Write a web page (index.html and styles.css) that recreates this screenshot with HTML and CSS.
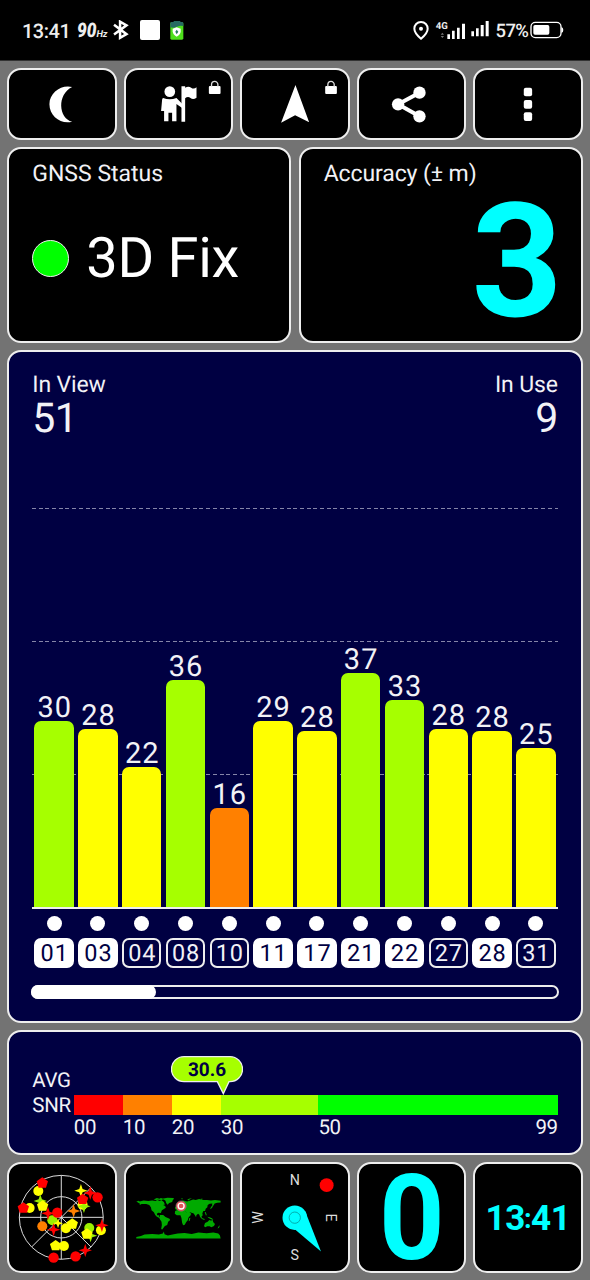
FILE: index.html
```html
<!DOCTYPE html>
<html lang="en">
<head>
<meta charset="utf-8">
<title>GNSS Status</title>
<link rel="stylesheet" href="styles.css">
</head>
<body>
<svg class="defs" width="0" height="0">
  <defs>
    <polygon id="penta" points="0,-16 17,-4 11,15 -11,15 -17,-4"/>
    <polygon id="star" points="0,-20 5,-5 20,0 5,5 0,20 -5,5 -20,0 -5,-5"/>
    <g id="lock"><rect x="0" y="15" width="35" height="24" rx="3" fill="#fff"/><path d="M8 17V11a9.500 9.500 0 0 1 19 0v6" fill="none" stroke="#ddd" stroke-width="4"/></g>
  </defs>
</svg>
<header class="status">
  <div class="status-left">
    <span class="clock">13:41</span>
    <span class="rate"><b>90</b><small>Hz</small></span>
    <svg class="bt" viewBox="340 62 46 58"><path d="M343 76L380 104 361 115V67L380 78 343 105" fill="none" stroke="#fff" stroke-width="7.500"/></svg>
    <span class="square"></span>
    <svg class="shield" viewBox="512 63 42 57"><rect x="523" y="63" width="20" height="8" fill="#276b62"/><rect x="513" y="67" width="39" height="52" rx="4" fill="#4ee01c"/><path d="M513 82V70q0-4 5-4h30q4 0 4 4v8q-10-3-19 2t-20 2z" fill="#276b62"/><path d="M532 82l12 4v8q0 10-12 16-12-6-12-16v-8z" fill="#fff"/><path d="M532 89l5 6-5 8-4-8z" fill="#287c60"/></svg>
  </div>
  <div class="status-right">
    <svg class="signals" viewBox="369 60 230 60"><path d="M393 66c-12 0-20 9-20 20 0 13 20 30 20 30s20-17 20-30c0-11-8-20-20-20z" fill="none" stroke="#fff" stroke-width="6"/><circle cx="393" cy="86" r="6" fill="#fff"/><text x="437" y="86" class="lte">4G</text><path d="M452 104l5-6 5 6zM452 108l5 6 5-6z" fill="#777"/><path d="M472 103h8v14h-8zM486 92h8v25h-8zM501 83h8v34h-8zM516 71h9v46h-9zM544 94h8v15h-8zM558 85h8v24h-8zM572 75h9v34h-9zM587 63h9v46h-9z" fill="#fff"/></svg>
    <span class="pct">57%</span>
    <svg class="battery" viewBox="722 64 102 54"><rect x="725" y="68" width="90" height="46" rx="13" fill="none" stroke="#fff" stroke-width="4"/><rect x="732" y="76" width="48" height="29" rx="5" fill="#fff"/><path d="M816 82q6 1 6 9t-6 9z" fill="#fff"/></svg>
  </div>
</header>
<main class="screen">
  <nav class="row">
    <button class="card tile"><svg viewBox="28 210 315 202"><path d="M217 260C185 252 149 276 149 312s35 61 68 52C176 354 171 282 217 260z" fill="#fff"/></svg></button>
    <button class="card tile"><svg viewBox="377 210 315 202"><g fill="#fff"><circle cx="508" cy="274" r="16"/><path d="M488 293q20 8 40 0l17 17v13l-17-12v52h-13v-26h-11v26h-13v-31h-9l3-33q0-5 3-6z"/><path d="M543 258h11v4q10-6 18 0t16-1v31q-10 7-18 1t-16 1v70h-11z"/></g><use href="#lock" x="625" y="242"/></svg></button>
    <button class="card tile"><svg viewBox="726 210 315 202"><path d="M886 254L927 366 885 345 843 367z" fill="#fff"/><use href="#lock" x="975" y="242"/></svg></button>
    <button class="card tile"><svg viewBox="207 210 315 202"><path d="M388 277L324 312 388 348" fill="none" stroke="#fff" stroke-width="12"/><g fill="#fff"><circle cx="388" cy="277" r="18.500"/><circle cx="324" cy="312" r="18.500"/><circle cx="388" cy="348" r="18.500"/></g></svg></button>
    <button class="card tile"><svg viewBox="556 210 315 202"><g fill="#fff"><rect x="702" y="262" width="25" height="26" rx="6"/><rect x="702" y="299" width="25" height="26" rx="6"/><rect x="702" y="336" width="25" height="26" rx="6"/></g></svg></button>
  </nav>
  <section class="pair">
    <div class="card fix"><span class="label">GNSS Status</span><div class="fix-value"><i></i><span>3D Fix</span></div></div>
    <div class="card accuracy"><span class="label acc">Accuracy (± m)</span><strong>3</strong></div>
  </section>
  <section class="card navy sats">
    <div class="counts"><div><span class="label view">In View</span><b>51</b></div><div class="in-use"><span class="label view">In Use</span><b>9</b></div></div>
    <div class="plot">
      <div class="col"><span>30</span><i class="lime" style="height:186.500px"></i></div>
      <div class="col"><span>28</span><i class="yellow" style="height:178.500px"></i></div>
      <div class="col"><span>22</span><i class="yellow" style="height:140.500px"></i></div>
      <div class="col"><span>36</span><i class="lime" style="height:227px"></i></div>
      <div class="col"><span>16</span><i class="orange" style="height:99.500px"></i></div>
      <div class="col"><span>29</span><i class="yellow" style="height:186px"></i></div>
      <div class="col"><span>28</span><i class="yellow" style="height:176.500px"></i></div>
      <div class="col"><span>37</span><i class="lime" style="height:234.500px"></i></div>
      <div class="col"><span>33</span><i class="lime" style="height:207.500px"></i></div>
      <div class="col"><span>28</span><i class="yellow" style="height:178px"></i></div>
      <div class="col"><span>28</span><i class="yellow" style="height:176.500px"></i></div>
      <div class="col"><span>25</span><i class="yellow" style="height:159px"></i></div>
    </div>
    <div class="ids">
      <div class="id used">01</div><div class="id used">03</div><div class="id">04</div><div class="id">08</div><div class="id">10</div><div class="id used">11</div><div class="id used">17</div><div class="id used">21</div><div class="id used">22</div><div class="id">27</div><div class="id used">28</div><div class="id">31</div>
    </div>
    <div class="scroll"><i></i></div>
  </section>
  <section class="card navy snr">
    <div class="snr-name">AVG<br>SNR</div>
    <div class="snr-main">
      <svg class="balloon" viewBox="513 107 216 116"><path d="M552 109H690a37 37 0 0 1 0 75H687L670 220 652 184H552a37 37 0 0 1 0-75z" fill="#a6ff00" stroke="#eee" stroke-width="4"/><text x="621" y="166" text-anchor="middle" class="avg">30.6</text></svg>
      <div class="scale"><i class="red"></i><i class="orange"></i><i class="yellow"></i><i class="lime"></i><i class="green"></i></div>
      <div class="ticks"><span>00</span><span>10</span><span>20</span><span>30</span><span class="last"><span>50</span><span>99</span></span></div>
    </div>
  </section>
  <nav class="row">
    <button class="card tile"><svg viewBox="28 27 316 321">
      <g fill="none" stroke="#ddd" stroke-width="3"><circle cx="185" cy="187" r="126"/><circle cx="185" cy="187" r="62"/><path d="M185 61V313M59 187H311M97 275L274 98M185 187L274 276"/></g>
      <g fill="#ff0"><circle cx="116" cy="108" r="15"/><circle cx="90" cy="159" r="15"/><circle cx="199" cy="220" r="15"/><circle cx="193" cy="273" r="15"/><circle cx="304" cy="226" r="15"/><circle cx="249" cy="149" r="15"/><use href="#star" x="244" y="107"/></g>
      <g fill="#9cf000"><use href="#star" x="122" y="138"/><use href="#star" x="253" y="154"/><circle cx="158" cy="196" r="15"/><circle cx="269" cy="219" r="15"/><use href="#star" x="273" y="242"/></g>
      <g fill="#ff0"><use href="#penta" x="129" y="152"/><use href="#penta" x="218" y="206"/><use href="#penta" x="168" y="271"/><use href="#penta" x="262" y="236"/></g>
      <g fill="#ff8000"><circle cx="128" cy="214" r="15"/><use href="#star" x="222" y="168"/></g>
      <g fill="red"><use href="#penta" x="128" y="83"/><use href="#penta" x="71" y="158"/><use href="#penta" x="249" y="132"/><circle cx="294" cy="127" r="15.500"/><circle cx="173" cy="173" r="15.500"/><circle cx="162" cy="308" r="15.500"/><circle cx="228" cy="304" r="15.500"/><use href="#star" x="272" y="114"/><use href="#star" x="145" y="175"/><use href="#star" x="162" y="224"/><use href="#star" x="307" y="211"/><use href="#star" x="257" y="286"/></g>
      <use href="#star" x="175" y="205" fill="#ff0" transform="translate(44 51) scale(.75)"/>
    </svg></button>
    <button class="card tile"><svg viewBox="23 27 317 321"><g fill="#0a0">
      <path d="M54 139l8-2 2 2 12-3 14 2 12-2 10 2 5-3 8 3 4-3 8 6 3 7-5 2 6 3 2 5-7 5-5 3-3 8-8-1-4 3 1 5 5 0 1 5 6 3-4 1-9-5-5-5-4-8-7-6-2-9-5-7-9-3-14 0-6 3 1-4z"/>
      <path d="M106 133l10-4 8 2 4-2 10 3-8 3-11-1-6 1zM136 130l12-2 17 1 3 2-4 4-2 6-9 3-5 5-4-5-2-7-7-5zM125 180l10 0 7 6 12 5 2 4-6 5-3 10-7 3-4 5-4 6-3-2 2-12-1-10-6-9z"/>
      <path d="M171 162l0-6 7-2 0-5 6-4 1-5 10-4 12 3 10-3 8-3 8 2 10-3 14 3 10 0 12 1 12-1 17 2v5l-10 1-8 2-4 7-4-1 1-6-8 1-6 4-1 7-5 4-2 7-5 0-3 7 1 6-4 4 3 5 7 2-1 3-7-3-6-6-2-7-4-3-5 5-1 6-4-7-4-5-6-2-6-2 6 6-4 4-5 3-5-9-5-7-8 0-7-3-6 2z"/>
      <path d="M171 168l8-4 12 3 10 0 6 8 6 5 5 0-7 8-2 8-5 6-4 7-5 2-3-8-2-14-3-8-11 0-6-5zM213 190l4-2-2 9-3 2zM261 204l8-4 5-5 6 2 3-4 3 9 5 5-3 6-8 4-5-3-7 0-7 3-3-4zM301 215l5-4-3 7-4 3zM268 185l7 2 7 3 4 4-7-1-7-4zM260 172l3-1 3 8-2 3zM279 156l5-6 1 3-3 6-6 4zM208 133l7-3 7 0-5 2-7 4zM188 130l7 0-3 3zM248 131l6 0-3 3z"/>
      <path d="M54 246l14-3 11-4 23-2 20 2 12-3 3-6 2 8 10 4 18-4 12-2 20-2 22 3 20-4 25 2 20-2 15 3 5 6 2 9H54z"/>
      </g><circle cx="189" cy="153" r="15.500" fill="#e84b52" stroke="#777" stroke-width="2"/><circle cx="189" cy="153" r="9" fill="#df5358" stroke="#fff" stroke-width="4"/></svg></button>
    <button class="card tile"><svg viewBox="21 27 317 321"><g class="rose" fill="#ddd"><text x="180" y="91">N</text><text x="180" y="315">S</text><text transform="translate(275 188) rotate(90)">E</text><text transform="translate(84 187) rotate(-90)">W</text></g><circle cx="276" cy="90" r="21" fill="red"/><path d="M180 223L259 290 211 168z" fill="#0ff"/><circle cx="180" cy="188" r="37" fill="#0ff"/><circle cx="180" cy="188" r="17" fill="none" stroke="#009d9d" stroke-width="2.500"/></svg></button>
    <button class="card tile zero"><span>0</span></button>
    <button class="card tile time"><span>13<em>:</em>41</span></button>
  </nav>
</main>
</body>
</html>
```
FILE: styles.css
```css
* { box-sizing: border-box; }
body { margin: 0; width: 590px; height: 1280px; background: #737373; color: #f2f2f6; font-family: Roboto, sans-serif; overflow: hidden; text-rendering: geometricPrecision; }
i, em { font-style: normal; display: block; }
.defs { display: none; }

.status { height: 61px; background: #000; border-bottom: 1px solid #333; display: flex; justify-content: space-between; padding: 0 26px 0 22px; color: #eee; }
.status-left, .status-right { display: flex; align-items: center; }
.clock { font-size: 20px; font-weight: 500; letter-spacing: -.5px; width: 55px; padding-top: 2px; }
.rate { font-weight: 700; font-style: italic; width: 36px; display: flex; align-items: baseline; }
.rate b { font-size: 20px; width: 19.500px; transform: scaleX(.86); transform-origin: 0 50%; }
.rate small { font-size: 9.500px; letter-spacing: -.2px; }
.bt { width: 15.500px; height: 19.500px; }
.square { width: 20px; height: 20px; background: #fff; border-radius: 2px; margin-left: 11px; }
.shield { width: 14px; height: 19px; margin-left: 10.500px; }
.signals { width: 76.700px; height: 20px; }
.lte { font: 700 29px Roboto, sans-serif; fill: #eee; }
.pct { font-size: 18.500px; font-weight: 500; width: 34.500px; margin-left: 6px; letter-spacing: -.6px; padding-top: 2px; }
.battery { width: 34px; height: 18px; }

.screen { height: 1219px; padding: 7px 7.300px; display: grid; grid-template-rows: 72px 196px 673px 125px 111px; gap: 7px; }
.row { display: grid; grid-template-columns: repeat(5, 1fr); grid-template-rows: 100%; gap: 7.300px; }
.pair { display: grid; grid-template-columns: 1fr 1fr; grid-template-rows: 196px; gap: 7.300px; }
.card { border: 2px solid #eee; border-radius: 14px; background: #000; color: inherit; min-width: 0; min-height: 0; }
.navy { background: #000042; }
.tile { padding: 0; font-family: inherit; display: grid; }
.tile svg { width: 100%; height: 100%; display: block; }
.label { display: block; font-size: 23px; line-height: 28px; }
.acc { letter-spacing: -.1px; }
.view { letter-spacing: -.15px; }

.fix { padding: 11px 23px 0; }
.fix-value { display: flex; align-items: center; gap: 17px; margin-top: 36px; height: 68px; font-size: 56px; letter-spacing: -.3px; color: #fff; }
.fix-value i { width: 37px; height: 37px; border-radius: 50%; background: #0f0; border: 1.500px solid #eee; }
.accuracy { padding: 11px 23px 0; display: flex; flex-direction: column; }
.accuracy strong { color: #0ff; font-size: 159px; line-height: 148px; align-self: flex-end; margin-right: -5px; }

.sats { padding: 19px 23px 0; }
.counts { display: flex; justify-content: space-between; height: 72px; }
.counts b { display: block; font-weight: 400; font-size: 41px; line-height: 40px; letter-spacing: -.5px; }
.in-use { text-align: right; }
.plot { height: 466px; border-bottom: 2px solid #eee; display: grid; grid-template-columns: repeat(12, 1fr); align-items: end;
  background:
    repeating-linear-gradient(90deg, #8585a8 0 4px, transparent 4px 6.700px) 0 65px / 100% 1px no-repeat,
    repeating-linear-gradient(90deg, #8585a8 0 4px, transparent 4px 6.700px) 0 198px / 100% 1px no-repeat,
    repeating-linear-gradient(90deg, #8585a8 0 4px, transparent 4px 6.700px) 0 331px / 100% 1px no-repeat; }
.col { padding: 0 2.200px; }
.col span { display: block; text-align: center; font-size: 29px; line-height: 26px; letter-spacing: 1px; padding-left: 1px; margin: 0 -2px; }
.col i { border-radius: 7px 7px 0 0; }
.lime { background: #a6ff00; }
.yellow { background: #ff0; }
.orange { background: #ff8000; }
.red { background: #f00; }
.green { background: #0f0; }
.ids { display: grid; grid-template-columns: repeat(12, 1fr); margin-top: 6px; }
.id { margin: 23px 2.200px 0; height: 30px; border: 2px solid #eee; border-radius: 7px; text-align: center; font-size: 23.500px; line-height: 27px; letter-spacing: .9px; padding-left: 1px; position: relative; }
.id::before { content: ""; position: absolute; width: 15px; height: 15px; border-radius: 50%; background: #fff; left: 50%; top: -24px; margin-left: -7.500px; }
.used { background: #fff; border-color: #fff; color: #000042; }
.scroll { height: 14px; border: 2px solid #eee; border-radius: 8px; margin: 17px -1px 0; }
.scroll i { width: 125px; height: 14px; margin: -2px; background: #fff; border-radius: 7px; }

.snr { display: flex; padding: 24px 23px 0; }
.snr-name { width: 41.500px; font-size: 20.500px; line-height: 25px; letter-spacing: -.3px; padding-top: 13px; }
.snr-main { flex: 1; }
.balloon { width: 72px; height: 38.700px; display: block; margin-left: 97px; }
.avg { font: 700 57px Roboto, sans-serif; fill: #000042; }
.scale, .ticks { display: grid; grid-template-columns: 49px 49px 49px 97.700px 1fr; }
.scale { height: 20px; }
.scale i { height: 20px; }
.ticks { font-size: 20.500px; line-height: 26px; letter-spacing: -.4px; }
.last { display: flex; justify-content: space-between; }

.rose { font: 43px Roboto, sans-serif; text-anchor: middle; }
.zero, .time { place-items: center; color: #0ff; font-weight: 700; }
.zero { font-size: 118px; line-height: 106px; }
.zero span { transform: translateY(1px) scaleX(.97); }
.time { font-size: 35px; }
.time em { display: inline-block; font-size: 27px; width: 6px; text-indent: -1px; transform: translateY(-2px); }
.time span { letter-spacing: -.3px; padding-top: 1px; }
```
